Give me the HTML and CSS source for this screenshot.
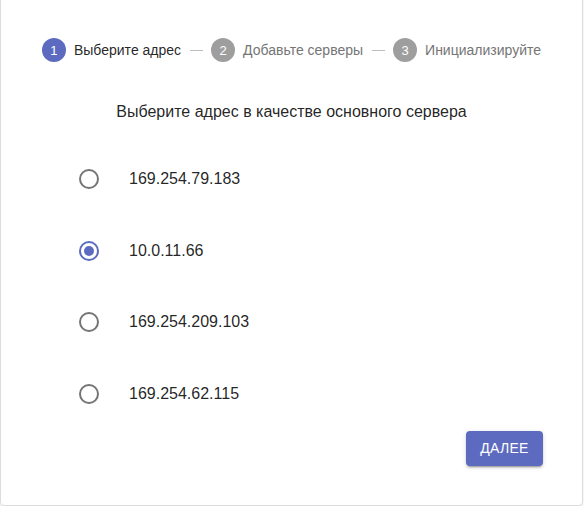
FILE: index.html
```html
<!DOCTYPE html>
<html lang="ru">
<head>
<meta charset="utf-8">
<link rel="stylesheet" href="styles.css">
</head>
<body>
<div class="card">
  <div class="stepper">
    <div class="step active"><span class="num">1</span><span class="label">Выберите адрес</span></div>
    <div class="line"></div>
    <div class="step"><span class="num">2</span><span class="label">Добавьте серверы</span></div>
    <div class="line"></div>
    <div class="step"><span class="num">3</span><span class="label">Инициализируйте</span></div>
  </div>
  <div class="title">Выберите адрес в качестве основного сервера</div>
  <div class="list">
    <label class="row"><span class="radio"></span><span class="ip">169.254.79.183</span></label>
    <label class="row"><span class="radio checked"></span><span class="ip">10.0.11.66</span></label>
    <label class="row"><span class="radio"></span><span class="ip">169.254.209.103</span></label>
    <label class="row"><span class="radio"></span><span class="ip">169.254.62.115</span></label>
  </div>
  <div class="actions"><button class="btn">Далее</button></div>
</div>
</body>
</html>
```
FILE: styles.css
```css
* { box-sizing: border-box; }
html, body { margin: 0; padding: 0; background: #fff; overflow: hidden; }
body { font-family: "Liberation Sans", Arial, sans-serif; color: rgba(0,0,0,0.87); }
.card {
  width: 583px;
  height: 516px;
  margin-top: -10px;
  border: 1px solid #dcdcdc;
  border-radius: 4px;
  box-shadow: 0 1px 2px rgba(0,0,0,0.12);
  display: flex;
  flex-direction: column;
}
.stepper {
  margin-top: 47px;
  height: 24px;
  display: flex;
  align-items: center;
  justify-content: center;
}
.step { display: flex; align-items: center; }
.num {
  width: 24px; height: 24px; border-radius: 50%;
  background: #9e9e9e; color: #fff;
  font-size: 13px;
  display: flex; align-items: center; justify-content: center;
}
.step.active .num { background: #5c6bc0; }
.label { margin-left: 8px; font-size: 14px; color: #757575; }
.step.active .label { color: rgba(0,0,0,0.87); }
.line { width: 13px; height: 1px; background: #bdbdbd; margin: 0 8px 0 9px; }
.title {
  margin-top: 40px;
  text-align: center;
  font-size: 16px;
  line-height: 20px;
}
.list {
  margin-top: 21px;
  padding-left: 78px;
  display: flex;
  flex-direction: column;
}
.row {
  height: 71.7px;
  display: flex;
  align-items: center;
  font-size: 16px;
}
.radio {
  width: 20px; height: 20px; border-radius: 50%;
  border: 2px solid #757575;
  display: flex; align-items: center; justify-content: center;
}
.radio.checked { border-color: #5c6bc0; }
.radio.checked::after {
  content: ""; width: 10px; height: 10px; border-radius: 50%; background: #5c6bc0;
}
.ip { margin-left: 30px; }
.actions {
  display: flex;
  justify-content: flex-end;
  padding-right: 39px;
  margin-top: 1px;
}
.btn {
  width: 77px; height: 35px;
  border: none; border-radius: 4px;
  background: #5c6bc0; color: #fff;
  font-family: "Liberation Sans", Arial, sans-serif;
  font-size: 14px;
  text-transform: uppercase;
  letter-spacing: 0.3px;
  box-shadow: 0 3px 1px -2px rgba(0,0,0,0.2), 0 2px 2px 0 rgba(0,0,0,0.14), 0 1px 5px 0 rgba(0,0,0,0.12);
}
```
